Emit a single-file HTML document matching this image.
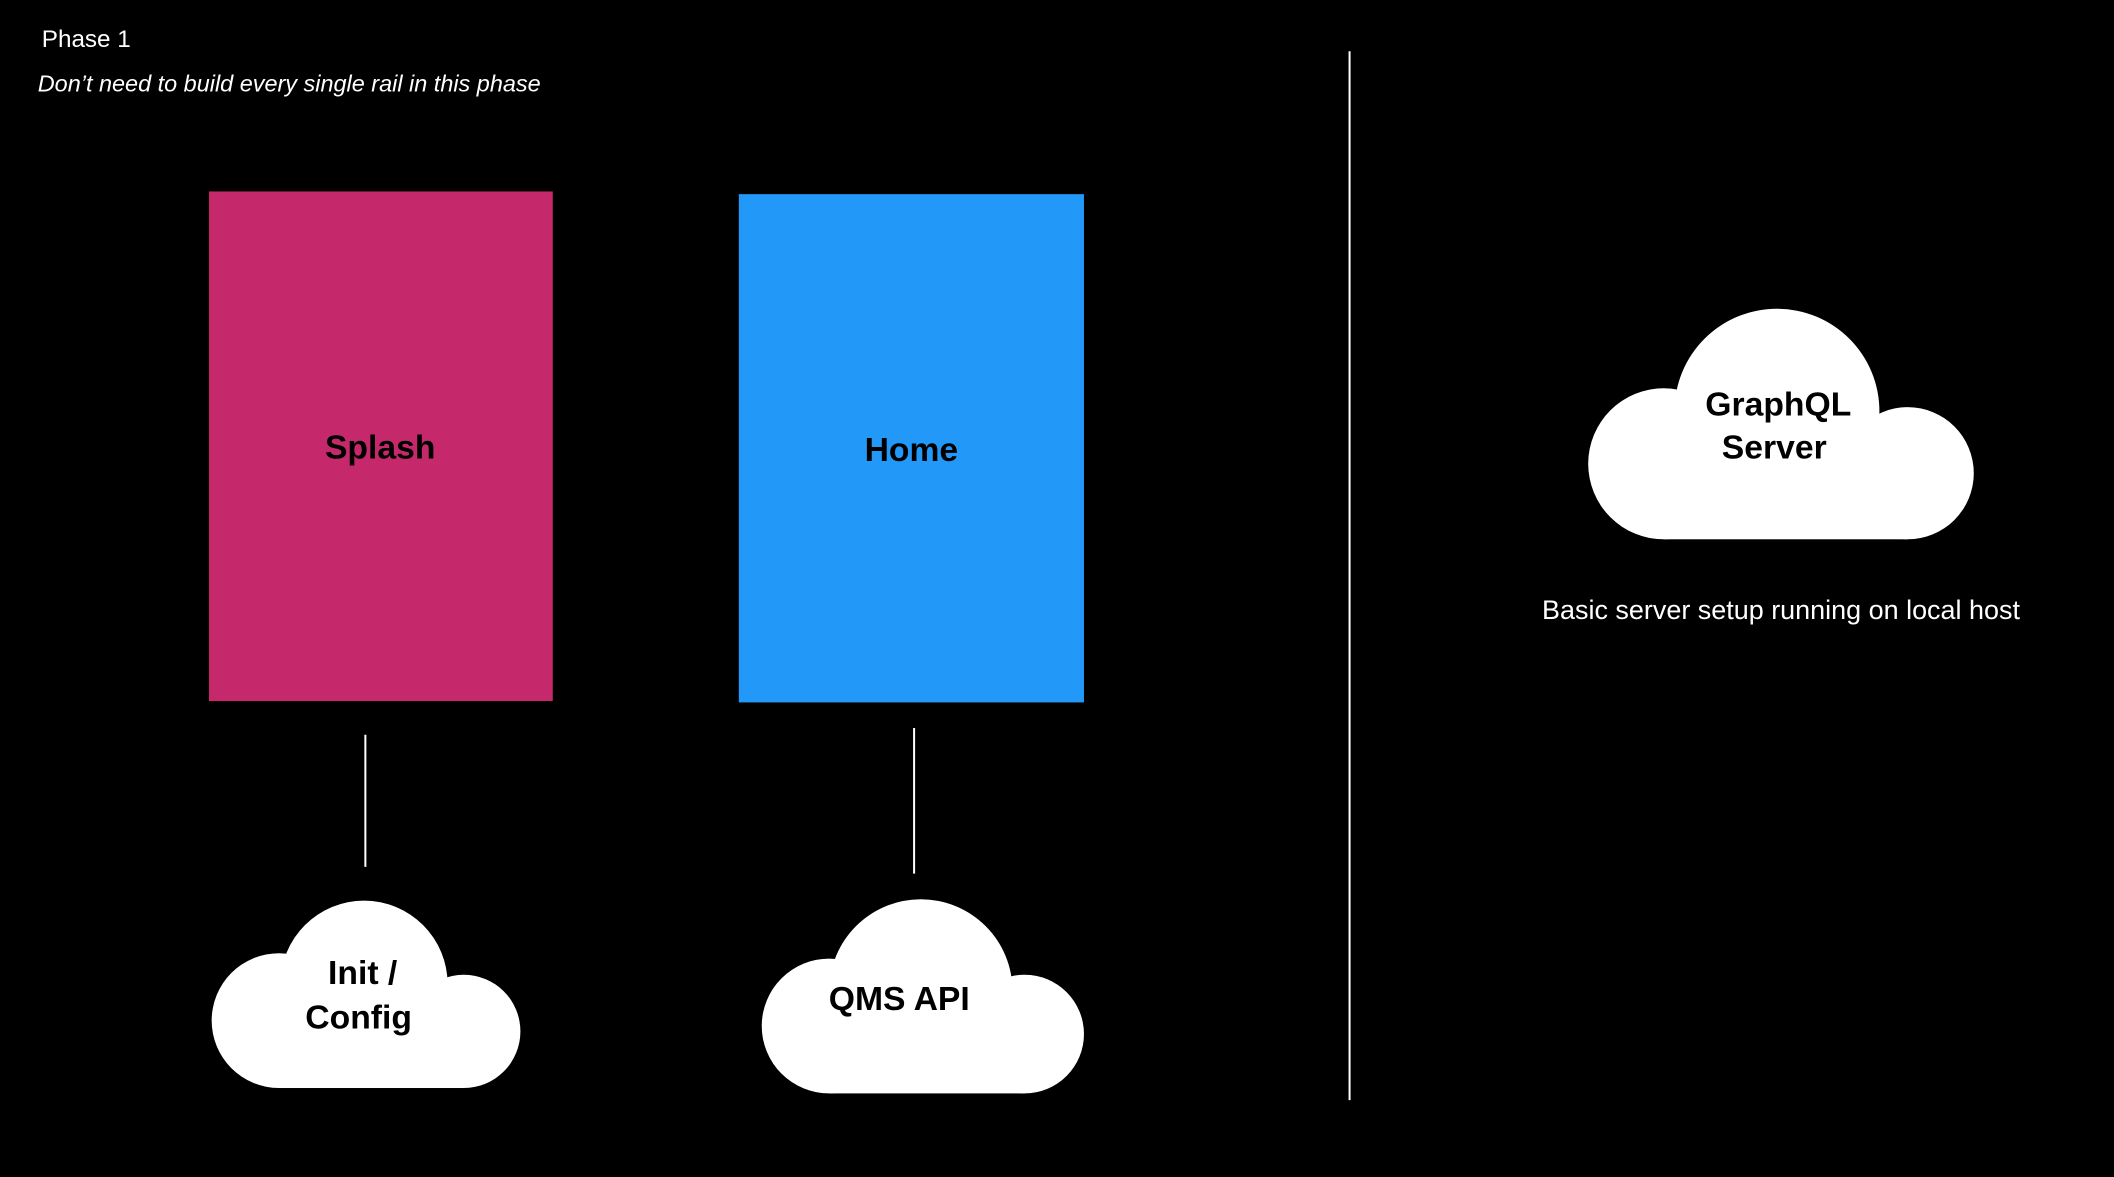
<!DOCTYPE html>
<html><head><meta charset="utf-8"><style>
html,body{margin:0;padding:0;background:#000;width:2114px;height:1177px;overflow:hidden}
svg{display:block}
text{font-family:"Liberation Sans",Arial,sans-serif}
</style></head><body>
<svg width="2114" height="1177" viewBox="0 0 1568 873" xmlns="http://www.w3.org/2000/svg">
<rect width="1568" height="873" fill="#000"/>
<text x="31" y="35" fill="#fff" font-size="18">Phase 1</text>
<text x="28" y="68" fill="#fff" font-size="17.4" font-style="italic">Don’t need to build every single rail in this phase</text>
<rect x="155" y="142" width="255" height="378" fill="#C5296B"/>
<rect x="548" y="144" width="256" height="377" fill="#2299F8"/>
<text x="282" y="340" fill="#000" font-size="25" font-weight="bold" text-anchor="middle">Splash</text>
<text x="676" y="342" fill="#000" font-size="25" font-weight="bold" text-anchor="middle">Home</text>
<line x1="1001" y1="38" x2="1001" y2="816" stroke="#fff" stroke-width="1.5"/>
<line x1="271" y1="545" x2="271" y2="643" stroke="#fff" stroke-width="1.5"/>
<line x1="678" y1="540" x2="678" y2="648" stroke="#fff" stroke-width="1.5"/>
<g fill="#fff">
<circle cx="270" cy="730" r="62"/><circle cx="207" cy="757" r="50"/><circle cx="344" cy="765" r="42"/>
<rect x="207" y="757" width="137" height="50"/>
<circle cx="683" cy="735" r="68"/><circle cx="615" cy="761" r="50"/><circle cx="760" cy="767" r="44"/>
<rect x="615" y="761" width="145" height="50"/>
<circle cx="1318" cy="305" r="76"/><circle cx="1234" cy="344" r="56"/><circle cx="1415" cy="351" r="49"/>
<rect x="1234" y="345" width="181" height="55"/>
</g>
<text x="269" y="730" fill="#000" font-size="25" font-weight="bold" text-anchor="middle">Init /</text>
<text x="266" y="763" fill="#000" font-size="25" font-weight="bold" text-anchor="middle">Config</text>
<text x="667" y="749" fill="#000" font-size="25" font-weight="bold" text-anchor="middle">QMS API</text>
<text x="1319" y="308" fill="#000" font-size="25" font-weight="bold" text-anchor="middle">GraphQL</text>
<text x="1316" y="340" fill="#000" font-size="25" font-weight="bold" text-anchor="middle">Server</text>
<text x="1321" y="459" fill="#fff" font-size="20" text-anchor="middle">Basic server setup running on local host</text>
</svg>
</body></html>
